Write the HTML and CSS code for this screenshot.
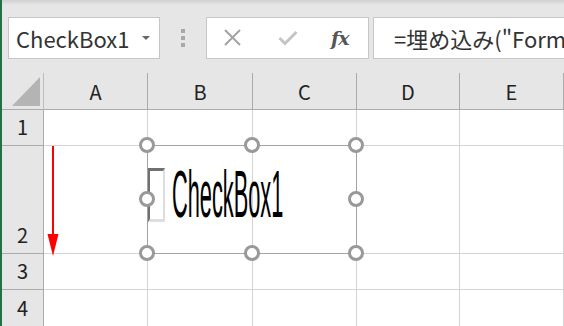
FILE: index.html
```html
<!DOCTYPE html>
<html lang="ja">
<head>
    <meta charset="UTF-8">
    <title>CheckBox1</title>
    <link rel="stylesheet" href="styles.css">
</head>
<body>
    <div class="app">
        <div class="toolbar">
            <div class="name-box">
                <span>CheckBox1</span>
                <span class="drop"></span>
            </div>
            <div class="grip">
                <span></span><span></span><span></span>
            </div>
            <div class="fx-box">
                <svg class="btn" width="20" height="18" viewBox="0 0 20 18">
                    <path d="M2 1 L17 16 M17 1 L2 16" stroke="#a3a3a3" stroke-width="2" fill="none"/>
                </svg>
                <svg class="btn" width="20" height="18" viewBox="0 0 20 18">
                    <path d="M1.5 9 L7 14.5 L18.5 3" stroke="#c4c4c4" stroke-width="3" fill="none"/>
                </svg>
                <span class="fx">fx</span>
            </div>
            <div class="formula">=埋め込み("Form</div>
        </div>

        <div class="sheet">
            <div class="corner"><span class="tri"></span></div>
            <div class="col-head">A</div>
            <div class="col-head">B</div>
            <div class="col-head">C</div>
            <div class="col-head">D</div>
            <div class="col-head">E</div>

            <div class="row-head">1</div>
            <div class="cell"></div><div class="cell"></div><div class="cell"></div><div class="cell"></div><div class="cell"></div>

            <div class="row-head">2</div>
            <div class="cell"></div><div class="cell"></div><div class="cell"></div><div class="cell"></div><div class="cell"></div>

            <div class="row-head">3</div>
            <div class="cell"></div><div class="cell"></div><div class="cell"></div><div class="cell"></div><div class="cell"></div>

            <div class="row-head">4</div>
            <div class="cell"></div><div class="cell"></div><div class="cell"></div><div class="cell"></div><div class="cell"></div>

            <!-- 選択中のチェックボックス -->
            <div class="control">
                <span class="check"></span>
                <span class="label">CheckBox1</span>
                <svg class="handles" width="228" height="126" viewBox="0 0 228 126">
                    <g fill="#fff" stroke="#999" stroke-width="3">
                        <circle cx="9" cy="9" r="6.5"/>
                        <circle cx="114" cy="9" r="6.5"/>
                        <circle cx="218" cy="9" r="6.5"/>
                        <circle cx="9" cy="63" r="6.5"/>
                        <circle cx="218" cy="63" r="6.5"/>
                        <circle cx="9" cy="117" r="6.5"/>
                        <circle cx="114" cy="117" r="6.5"/>
                        <circle cx="218" cy="117" r="6.5"/>
                    </g>
                </svg>
            </div>

            <svg class="arrow" width="12" height="110" viewBox="0 0 12 110">
                <line x1="6" y1="0" x2="6" y2="92" stroke="#ff0000" stroke-width="2"/>
                <polygon points="0.5,88 11.5,88 6,110" fill="#ff0000"/>
            </svg>
        </div>
    </div>
</body>
</html>
```

FILE: styles.css
```css
html, body {
    margin: 0;
    padding: 0;
    overflow: hidden;
}

body {
    width: 564px;
    height: 326px;
    font-family: "Noto Sans CJK JP", "Noto Sans", sans-serif;
    color: #222;
}

.app {
    height: 326px;
    border-left: 2px solid #217346;
    background: #e6e6e6;
}

/* 数式バー */
.toolbar {
    height: 73px;
    box-sizing: border-box;
    padding: 17px 0 0 6px;
    display: flex;
    align-items: flex-start;
    background: linear-gradient(#d0d0d0, #e6e6e6 5px);
}

.name-box {
    width: 152px;
    height: 42px;
    box-sizing: border-box;
    border: 1px solid #c6c6c6;
    background: #fff;
    display: flex;
    align-items: center;
    padding-left: 7px;
    font-size: 22px;
    color: #333;
}

.drop {
    margin-left: auto;
    margin-right: 9px;
    width: 0;
    height: 0;
    border-left: 4px solid transparent;
    border-right: 4px solid transparent;
    border-top: 4px solid #666;
}

.grip {
    width: 46px;
    height: 42px;
    display: flex;
    flex-direction: column;
    align-items: center;
    justify-content: center;
    gap: 3px;
}

.grip span {
    width: 4px;
    height: 4px;
    background: #a8a8a8;
}

.fx-box {
    width: 163px;
    height: 42px;
    box-sizing: border-box;
    border: 1px solid #c6c6c6;
    background: #fff;
    display: flex;
    align-items: center;
    padding-left: 16px;
    gap: 35px;
}

.fx {
    font-family: "DejaVu Serif", "Liberation Serif", serif;
    font-style: italic;
    font-weight: bold;
    font-size: 19px;
    color: #555;
    margin-left: -2px;
    letter-spacing: -1px;
}

.formula {
    flex: 1;
    height: 42px;
    box-sizing: border-box;
    margin-left: 4px;
    margin-right: -6px;
    border: 1px solid #c6c6c6;
    background: #fff;
    padding-left: 20px;
    line-height: 40px;
    font-size: 22px;
    color: #333;
    white-space: nowrap;
    overflow: hidden;
}

/* シート */
.sheet {
    position: relative;
    display: grid;
    grid-template-columns: 42px 104px 105px 104px 103px 1fr;
    grid-template-rows: 37px 36px 108px 36px 37px;
    background: #fff;
}

.sheet > div {
    box-sizing: border-box;
}

.corner {
    background: #e6e6e6;
    border-right: 1px solid #bdbdbd;
    border-bottom: 1px solid #ababab;
    position: relative;
}

.tri {
    position: absolute;
    left: 10px;
    top: 4px;
    width: 0;
    height: 0;
    border-left: 28px solid transparent;
    border-bottom: 29px solid #b4b4b4;
}

.col-head {
    background: #e6e6e6;
    border-right: 1px solid #ababab;
    border-bottom: 1px solid #ababab;
    display: flex;
    align-items: center;
    justify-content: center;
    font-size: 20px;
    padding-top: 1px;
}

.row-head {
    background: #e6e6e6;
    border-right: 1px solid #ababab;
    border-bottom: 1px solid #ababab;
    display: flex;
    align-items: flex-end;
    justify-content: center;
    font-size: 20px;
    padding-bottom: 4px;
}

.cell {
    border-right: 1px solid #d4d4d4;
    border-bottom: 1px solid #d4d4d4;
}

.control {
    position: absolute;
    left: 145px;
    top: 72px;
    width: 210px;
    height: 109px;
    box-sizing: border-box;
    border: 1px solid #a3a3a3;
    display: flex;
    align-items: flex-start;
}

.check {
    flex-shrink: 0;
    width: 17px;
    height: 54px;
    box-sizing: border-box;
    margin-top: 22px;
    border-top: 3px solid #707070;
    border-left: 2px solid #707070;
    border-right: 2px solid #dedede;
    border-bottom: 3px solid #dedede;
    background: #fff;
}

.label {
    flex-shrink: 0;
    margin-top: 15px;
    margin-left: 7px;
    font-family: "Liberation Sans", Arial, sans-serif;
    font-size: 66px;
    line-height: 1;
    color: #000;
    white-space: nowrap;
    transform: scaleX(0.33);
    transform-origin: left top;
}

.handles {
    position: absolute;
    left: -10px;
    top: -10px;
}

.arrow {
    position: absolute;
    left: 45px;
    top: 73px;
}
```
